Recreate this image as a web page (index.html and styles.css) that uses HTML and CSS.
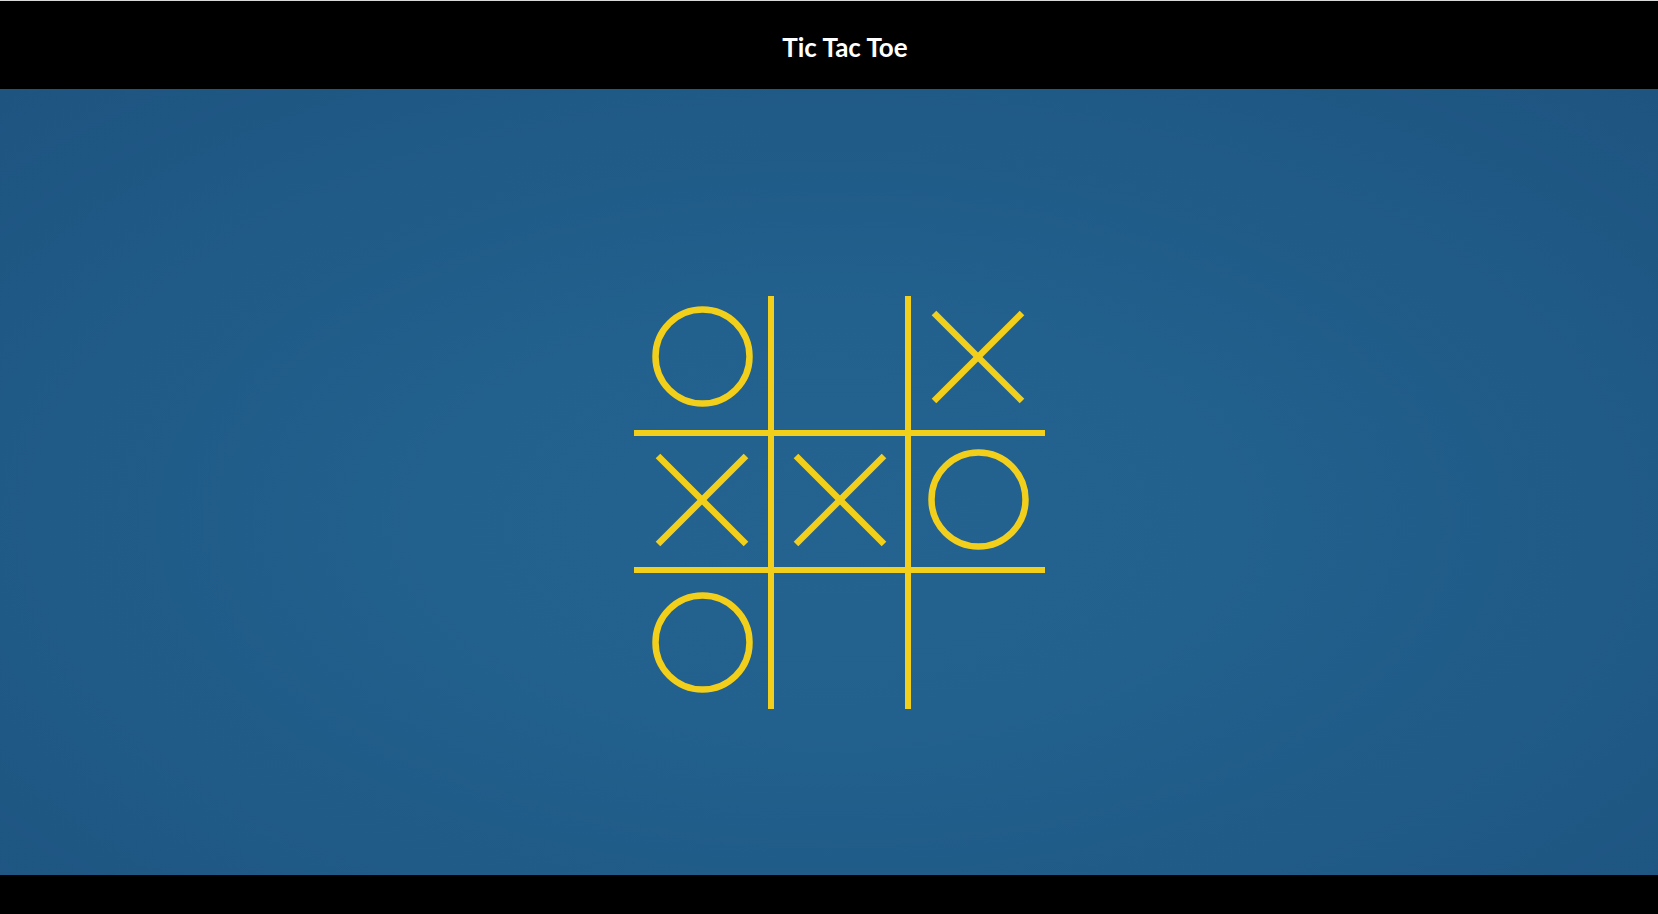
FILE: index.html
```html
<!DOCTYPE html>
<html lang="en">
<head>
<meta charset="utf-8">
<title>Tic Tac Toe</title>
<link rel="stylesheet" href="styles.css">
</head>
<body>
<div class="app">
  <header class="topbar">
    <h1 class="title">Tic Tac Toe</h1>
  </header>
  <main class="stage">
    <div class="board">
      <div class="cell r0 c0"><svg class="mark-o" viewBox="0 0 101 101" width="101" height="101"><circle cx="50.5" cy="50.5" r="47" /></svg></div>
      <div class="cell r0 c1"></div>
      <div class="cell r0 c2"><svg class="mark-x" viewBox="0 0 94 94" width="94" height="94"><line x1="3" y1="3" x2="91" y2="91"/><line x1="91" y1="3" x2="3" y2="91"/></svg></div>
      <div class="cell r1 c0"><svg class="mark-x" viewBox="0 0 94 94" width="94" height="94"><line x1="3" y1="3" x2="91" y2="91"/><line x1="91" y1="3" x2="3" y2="91"/></svg></div>
      <div class="cell r1 c1"><svg class="mark-x" viewBox="0 0 94 94" width="94" height="94"><line x1="3" y1="3" x2="91" y2="91"/><line x1="91" y1="3" x2="3" y2="91"/></svg></div>
      <div class="cell r1 c2"><svg class="mark-o" viewBox="0 0 101 101" width="101" height="101"><circle cx="50.5" cy="50.5" r="47" /></svg></div>
      <div class="cell r2 c0"><svg class="mark-o" viewBox="0 0 101 101" width="101" height="101"><circle cx="50.5" cy="50.5" r="47" /></svg></div>
      <div class="cell r2 c1"></div>
      <div class="cell r2 c2"></div>
    </div>
  </main>
  <footer class="bottombar"></footer>
</div>
</body>
</html>
```

FILE: styles.css
```css
* { box-sizing: border-box; }
html, body {
  margin: 0;
  padding: 0;
  height: 100%;
  overflow: hidden;
}
body {
  font-family: Lato, "Liberation Sans", sans-serif;
  background: #000;
}
.app {
  display: flex;
  flex-direction: column;
  height: 100vh;
}
.topbar {
  height: 89px;
  flex: 0 0 89px;
  background: #000;
  border-top: 1px solid #d9d9d9;
  display: flex;
  align-items: center;
  justify-content: center;
  padding-top: 6px;
}
.title {
  margin: 0;
  padding-left: 32px;
  color: #fff;
  font-size: 26px;
  font-weight: 700;
  line-height: 1.2;
}
.stage {
  flex: 1 1 auto;
  background: radial-gradient(ellipse at 50% 55%, #24628f 0%, #22608d 35%, #1e5480 100%);
  display: flex;
  align-items: center;
  justify-content: center;
}
.board {
  margin-left: 21px;
  margin-top: 41px;
  display: grid;
  grid-template-columns: 140px 131px 140px;
  grid-template-rows: 140px 131px 142px;
}
.cell {
  display: flex;
  align-items: center;
  justify-content: center;
  border: 0 solid #f2cf1b;
}
.c0 { border-right-width: 6px; padding-left: 2px; }
.c2 { border-left-width: 6px; }
.r0 { border-bottom-width: 6px; padding-bottom: 13px; }
.r1 { padding-bottom: 4px; }
.r2 { border-top-width: 6px; padding-top: 3px; }
.mark-o circle {
  fill: none;
  stroke: #f2cf1b;
  stroke-width: 6.5;
}
.mark-x line {
  stroke: #f2cf1b;
  stroke-width: 6.5;
  stroke-linecap: butt;
}
.bottombar {
  flex: 0 0 39px;
  height: 39px;
  background: #000;
}
```
